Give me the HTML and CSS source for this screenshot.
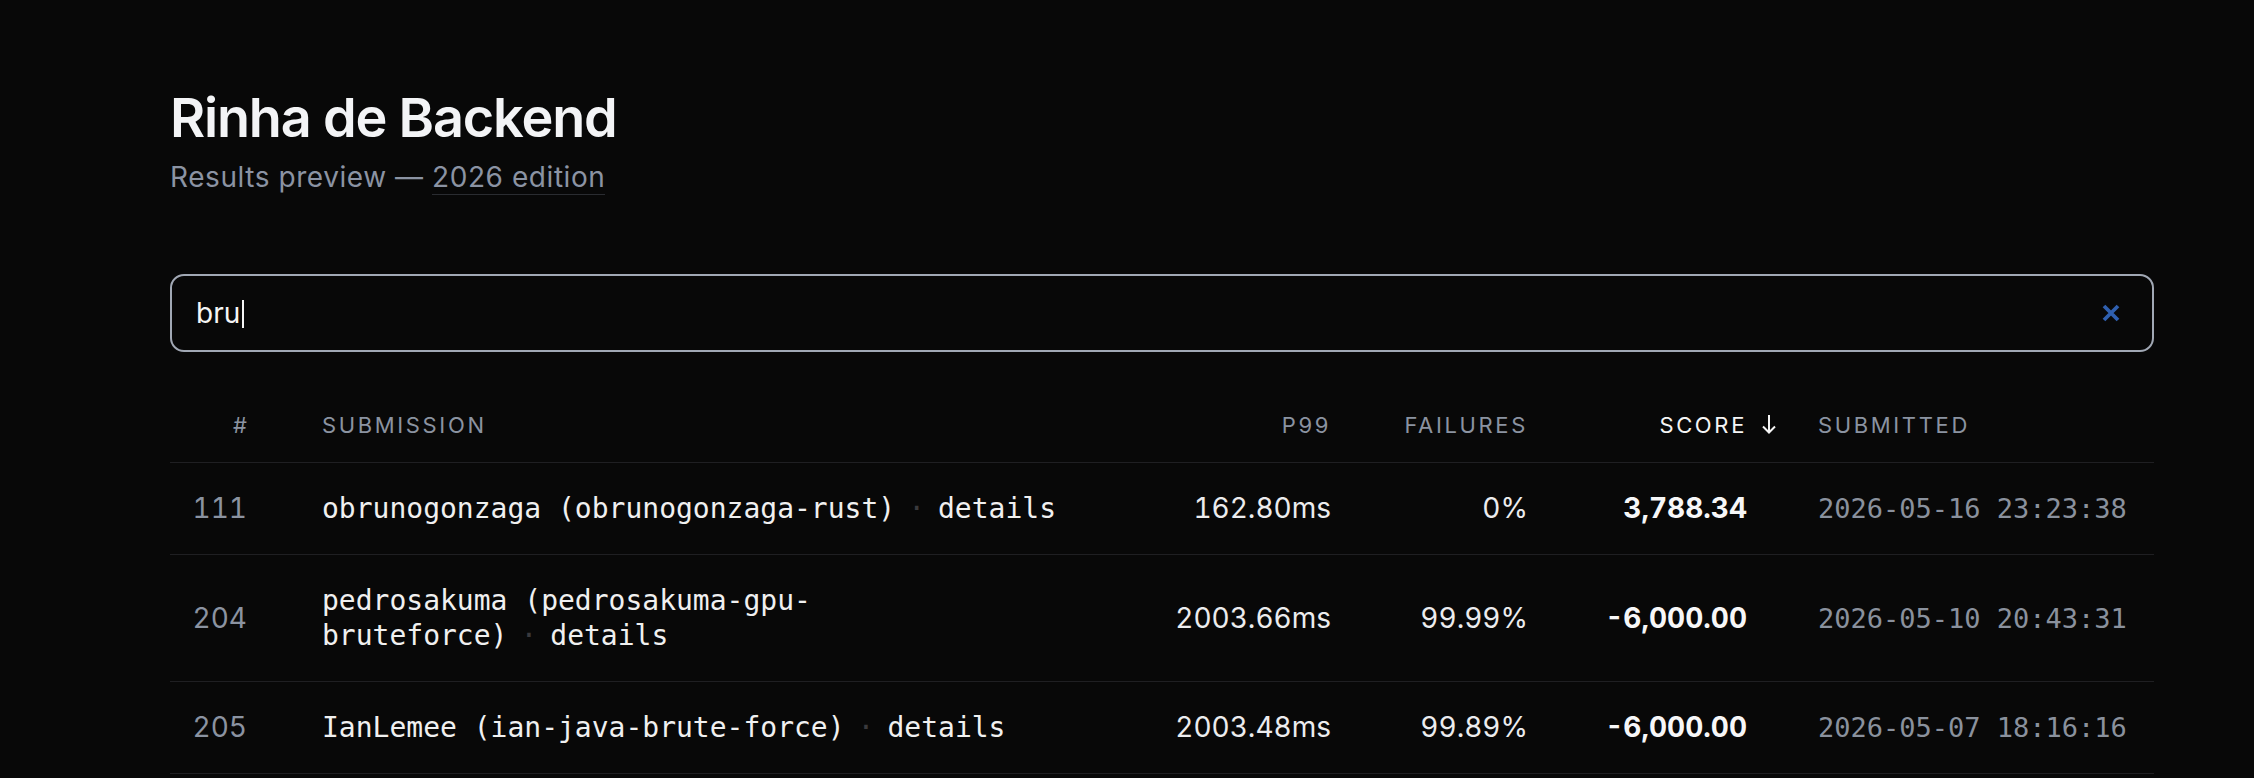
FILE: index.html
```html
<!DOCTYPE html>
<html lang="en">
<head>
<meta charset="utf-8">
<title>Rinha de Backend — Results preview</title>
<link rel="stylesheet" href="styles.css">
</head>
<body>
<main class="page">
  <header class="masthead">
    <h1 class="title">Rinha de Backend</h1>
    <p class="subtitle">Results preview — <a class="edition" href="#">2026 edition</a></p>
  </header>

  <div class="search">
    <input class="search-input" type="text" value="bru" aria-label="Search submissions">
    <span class="caret" aria-hidden="true"></span>
    <button class="search-clear" type="button" aria-label="Clear search">
      <svg width="18" height="18" viewBox="0 0 18 18" aria-hidden="true">
        <path d="M2 2 L16 16 M16 2 L2 16" stroke="currentColor" stroke-width="3.8" fill="none"/>
      </svg>
    </button>
  </div>

  <table class="results">
    <colgroup>
      <col class="col-rank">
      <col class="col-sub">
      <col class="col-p99">
      <col class="col-fail">
      <col class="col-score">
      <col class="col-date">
    </colgroup>
    <thead>
      <tr>
        <th class="num">#</th>
        <th class="sub">Submission</th>
        <th class="num">P99</th>
        <th class="num">Failures</th>
        <th class="num active"><span class="sortable">Score<svg class="sort-arrow" width="16" height="20" viewBox="0 0 16 20" aria-hidden="true"><path d="M8 1 V18.5 M2 12.5 L8 18.5 L14 12.5" stroke="currentColor" stroke-width="2" fill="none"/></svg></span></th>
        <th class="date">Submitted</th>
      </tr>
    </thead>
    <tbody>
      <tr>
        <td class="num rank">111</td>
        <td class="sub"><span class="name">obrunogonzaga (obrunogonzaga-rust)</span><span class="sep">·</span><a class="details" href="#">details</a></td>
        <td class="num">162.80ms</td>
        <td class="num">0%</td>
        <td class="num score">3,788.34</td>
        <td class="date">2026-05-16 23:23:38</td>
      </tr>
      <tr>
        <td class="num rank">204</td>
        <td class="sub"><span class="name">pedrosakuma (pedrosakuma-gpu-bruteforce)</span><span class="sep">·</span><a class="details" href="#">details</a></td>
        <td class="num">2003.66ms</td>
        <td class="num">99.99%</td>
        <td class="num score">-6,000.00</td>
        <td class="date">2026-05-10 20:43:31</td>
      </tr>
      <tr>
        <td class="num rank">205</td>
        <td class="sub"><span class="name">IanLemee (ian-java-brute-force)</span><span class="sep">·</span><a class="details" href="#">details</a></td>
        <td class="num">2003.48ms</td>
        <td class="num">99.89%</td>
        <td class="num score">-6,000.00</td>
        <td class="date">2026-05-07 18:16:16</td>
      </tr>
    </tbody>
  </table>
</main>
</body>
</html>
```

FILE: styles.css
```css
html, body {
  margin: 0;
  background: #080808;
}

body {
  color: #ececee;
  font-family: Inter, "Liberation Sans", sans-serif;
}

.page {
  padding: 86px 100px 0 170px;
}

.title {
  margin: 0;
  font-size: 54px;
  line-height: 64px;
  font-weight: 600;
  letter-spacing: -0.022em;
  color: #f3f4f6;
}

.subtitle {
  margin: 7px 0 0;
  font-size: 28px;
  line-height: 40px;
  letter-spacing: 0.02em;
  color: #8b93a3;
}

.edition {
  color: inherit;
  text-decoration: none;
  border-bottom: 1px solid #2a2c31;
}

.search {
  margin-top: 77px;
  height: 78px;
  box-sizing: border-box;
  display: flex;
  align-items: center;
  border: 2px solid #a1a8b4;
  border-radius: 14px;
  padding: 0 32px 0 24px;
}

.search-input {
  field-sizing: content;
  min-width: 0;
  padding: 0;
  border: none;
  outline: none;
  background: transparent;
  color: #f5f5f5;
  caret-color: transparent;
  font-family: Inter, "Liberation Sans", sans-serif;
  font-size: 28px;
  line-height: 40px;
}

.caret {
  width: 2px;
  height: 28px;
  margin-left: 2px;
  margin-top: 2px;
  background: #f5f5f5;
}

.search-clear {
  margin-left: auto;
  display: flex;
  padding: 0;
  border: none;
  background: none;
  color: #2f5fae;
  cursor: pointer;
}

.results {
  margin-top: 36px;
  width: 100%;
  border-collapse: collapse;
  table-layout: fixed;
}

.col-rank { width: 77px; }
.col-sub { width: 843px; }
.col-p99 { width: 241px; }
.col-fail { width: 197px; }
.col-score { width: 219px; }
.col-date { width: 407px; }

.results th {
  padding: 20px 0;
  font-size: 22px;
  line-height: 34px;
  font-weight: 400;
  letter-spacing: 0.12em;
  text-transform: uppercase;
  color: #8b93a1;
  border-bottom: 1px solid #1f1f22;
  white-space: nowrap;
}

.results th.num { text-align: right; }
.results th.num:first-child { letter-spacing: 0; }
.results th.sub, .results td.sub { text-align: left; padding-left: 75px; }
.results th.date, .results td.date { text-align: left; padding-left: 71px; }

.results th.active { color: #f5f5f5; }

.sortable {
  position: relative;
}

.sort-arrow {
  position: absolute;
  left: calc(100% + 14px);
  top: 50%;
  margin-top: -11px;
}

.results td {
  padding: 28px 0;
  font-size: 28px;
  line-height: 35px;
  vertical-align: middle;
  border-bottom: 1px solid #1f1f22;
  color: #ececee;
  font-variant-numeric: tabular-nums;
}

.results td.num { text-align: right; }

.results td.rank { color: #8b93a1; }

.results td.score {
  font-weight: 700;
  color: #f7f7f8;
}

.results td.sub {
  font-family: "DejaVu Sans Mono", "Liberation Mono", monospace;
  line-height: 35px;
  color: #f0f0f0;
}

.sep {
  margin: 0 13px;
  color: #3a3a3d;
}

.details {
  color: #f0f0f0;
  text-decoration: none;
}

.results td.date {
  font-family: "DejaVu Sans Mono", "Liberation Mono", monospace;
  font-size: 27px;
  color: #8a919d;
  white-space: nowrap;
}
```
